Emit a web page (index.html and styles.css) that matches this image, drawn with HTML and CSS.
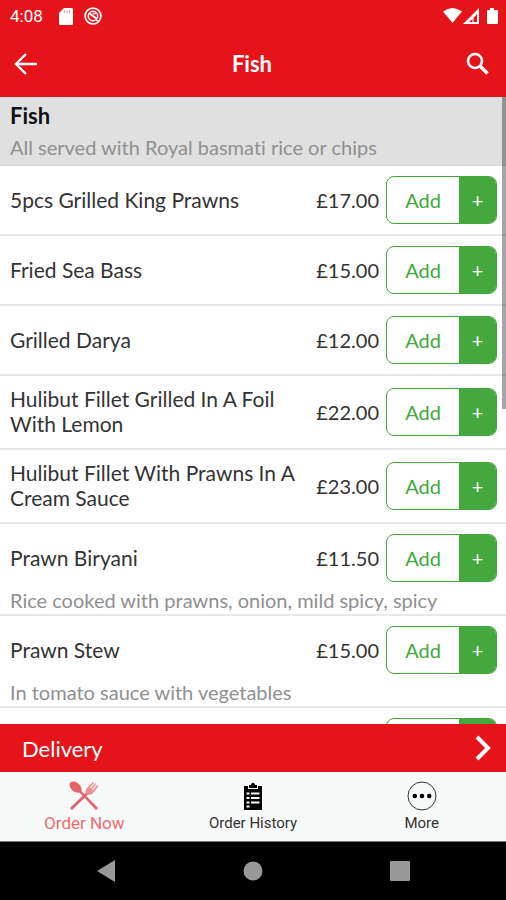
FILE: index.html
```
<!DOCTYPE html>
<html lang="en">
<head>
    <meta charset="UTF-8">
    <meta name="viewport" content="width=device-width, initial-scale=1.0">
    <title>Fish</title>
    <link rel="stylesheet" href="styles.css">
</head>

<body>
    <div class="status-bar">
        <span class="clock">4:08</span>
        <svg class="sd-icon" width="14" height="17" viewBox="0 0 14 17"><path fill="#fff" d="M5 0h7.500a1.500 1.500 0 0 1 1.500 1.500v14a1.500 1.500 0 0 1-1.500 1.500h-11A1.500 1.500 0 0 1 0 15.500V5z"/><path stroke="#e5141b" stroke-width="1" opacity=".6" d="M5.500 2.500v2M8 2.500v2M10.500 2.500v2"/></svg>
        <svg class="app-icon" width="18" height="18" viewBox="0 0 18 18" fill="none" stroke="#fff"><circle cx="9" cy="9" r="7.900" stroke-width="1.700"/><circle cx="9" cy="9" r="4.700" stroke-width="1.500"/><path stroke-width="2" d="M5.500 6.500l7 5"/><path stroke-width="1.500" d="M8.500 6.500h3.500"/><path stroke-width="1.600" d="M12.500 13l2.500 2"/></svg>
        <svg class="signal-icons" width="55" height="18" viewBox="0 0 55 18"><path fill="#fff" d="M0 4.500Q9.500-2.500 19 4.500L9.500 16z"/><path fill="#fff" d="M36 1v16H20z"/><path fill="#e5141b" d="M34 7v8h-3.500v-4zM29.500 12v3H26z"/><path fill="#fff" d="M47 1h4v2h3a1 1 0 0 1 1 1v12a1 1 0 0 1-1 1h-9a1 1 0 0 1-1-1V4a1 1 0 0 1 1-1h2z"/></svg>
    </div>

    <header class="header">
        <button class="icon-button" aria-label="Back">
            <svg width="24" height="22" viewBox="0 0 24 22" fill="none" stroke="#fff" stroke-width="2.400"><path d="M12 1L2 11l10 10M2 11h21"/></svg>
        </button>
        <h1>Fish</h1>
        <button class="icon-button" aria-label="Search">
            <svg width="24" height="24" viewBox="0 0 24 24" fill="none" stroke="#fff"><circle cx="9" cy="9" r="7" stroke-width="2.600"/><path stroke-width="3.600" d="M14 14l7.500 7.500"/></svg>
        </button>
    </header>

    <main class="menu">
        <div class="section-title">
            <h2>Fish</h2>
            <p>All served with Royal basmati rice or chips</p>
        </div>
        <div class="item">
            <span class="name">5pcs Grilled King Prawns</span>
            <span class="price">£17.00</span>
            <button class="add-button"><span class="add">Add</span><span class="plus">+</span></button>
        </div>
        <div class="item">
            <span class="name">Fried Sea Bass</span>
            <span class="price">£15.00</span>
            <button class="add-button"><span class="add">Add</span><span class="plus">+</span></button>
        </div>
        <div class="item">
            <span class="name">Grilled Darya</span>
            <span class="price">£12.00</span>
            <button class="add-button"><span class="add">Add</span><span class="plus">+</span></button>
        </div>
        <div class="item">
            <span class="name">Hulibut Fillet Grilled In A Foil With Lemon</span>
            <span class="price">£22.00</span>
            <button class="add-button"><span class="add">Add</span><span class="plus">+</span></button>
        </div>
        <div class="item">
            <span class="name">Hulibut Fillet With Prawns In A Cream Sauce</span>
            <span class="price">£23.00</span>
            <button class="add-button"><span class="add">Add</span><span class="plus">+</span></button>
        </div>
        <div class="item with-description">
            <span class="name">Prawn Biryani</span>
            <span class="price">£11.50</span>
            <button class="add-button"><span class="add">Add</span><span class="plus">+</span></button>
            <p class="description">Rice cooked with prawns, onion, mild spicy, spicy</p>
        </div>
        <div class="item with-description">
            <span class="name">Prawn Stew</span>
            <span class="price">£15.00</span>
            <button class="add-button"><span class="add">Add</span><span class="plus">+</span></button>
            <p class="description">In tomato sauce with vegetables</p>
        </div>
        <div class="item">
            <span class="name"></span>
            <span class="price"></span>
            <button class="add-button" aria-label="Add"><span class="add"></span><span class="plus"></span></button>
        </div>
        <div class="scrollbar"></div>
    </main>

    <button class="delivery">
        <span>Delivery</span>
        <svg width="18" height="26" viewBox="0 0 18 26" fill="none" stroke="#fff" stroke-width="4"><path d="M3 2l11 11L3 24"/></svg>
    </button>

    <nav class="tabs">
        <a href="#" class="tab active">
            <svg width="30" height="30" viewBox="0 0 30 30"><g fill="#e2636a"><path d="M1 2C4-1 9 1 11.500 5c1.500 2.500 1.300 4 .8 5L29 27l-2 2L10.500 11.500C6 13-1 7 1 2z"/><path d="M1 27l16-15.500 2 2L3 29z"/></g><path fill="#eb9296" d="M16.500 12.500c-.5-3 .5-5 2.500-6.500l5-5 1 1-4 4.500.8.800L26.500 2l1 1-4.500 5 .8.800L28.500 4l1 1-4.500 6c-2 2.500-4 3-6.500 2.500z"/></svg>
            <span>Order Now</span>
        </a>
        <a href="#" class="tab">
            <svg width="30" height="30" viewBox="0 0 30 30"><path d="M6 5h4v3h10V5h4v24H6z"/><path d="M11 4h2c.5-3 3.500-3 4 0h2v3h-8z"/><path stroke="#f8f9f9" stroke-width="2" d="M8.500 12.500h3M13 12.500h8.500M8.500 17h3M13 17h8.500M8.500 21.500h3M13 21.500h8.500M8.500 25.500h3"/></svg>
            <span>Order History</span>
        </a>
        <a href="#" class="tab">
            <svg width="30" height="30" viewBox="0 0 30 30"><circle cx="15" cy="15" r="14" fill="none" stroke="#333" stroke-width="1"/><circle cx="7.800" cy="15" r="2.300"/><circle cx="15" cy="15" r="2.300"/><circle cx="22.200" cy="15" r="2.300"/></svg>
            <span>More</span>
        </a>
    </nav>

    <div class="system-nav">
        <button aria-label="System back"><svg width="20" height="22" viewBox="0 0 20 22"><path fill="#999" d="M19 0v22L1 11z"/></svg></button>
        <button aria-label="Home"><svg width="20" height="20" viewBox="0 0 20 20"><circle cx="10" cy="10" r="9.500" fill="#999"/></svg></button>
        <button aria-label="Recent apps"><svg width="20" height="20" viewBox="0 0 20 20"><rect width="20" height="20" rx="1" fill="#999"/></svg></button>
    </div>
</body>
</html>
```
FILE: styles.css
```
* {
    box-sizing: border-box;
}
body {
    font-family: Lato, sans-serif;
    font-variant-ligatures: none;
    color: #333;
    background-color: #fff;
    margin: 0;
    height: 100vh;
    display: flex;
    flex-direction: column;
}
h1, h2, p {
    margin: 0;
}
button {
    font-family: inherit;
    border: none;
    background: none;
    padding: 0;
    cursor: pointer;
}
svg {
    display: block;
}
.status-bar {
    flex: none;
    display: flex;
    align-items: center;
    height: 32px;
    padding: 0 8px 0 10px;
    background-color: #e5141b;
    color: #fff;
}
.clock {
    font-family: Roboto, sans-serif;
    font-size: 17px;
}
.sd-icon {
    margin-left: 16px;
}
.app-icon {
    margin-left: 11px;
}
.signal-icons {
    margin-left: auto;
}
.header {
    flex: none;
    display: flex;
    align-items: center;
    justify-content: space-between;
    height: 65px;
    padding: 0 16px 2px 14px;
    background-color: #e5141b;
    color: #fff;
}
.header h1 {
    font-size: 22px;
    font-weight: bold;
}
.menu {
    position: relative;
    flex: 1;
    min-height: 0;
    overflow: hidden;
}
.section-title {
    padding: 7px 10px;
    background-color: #e0e0e0;
    border-bottom: 1px solid #d6d6d6;
}
.section-title h2 {
    font-size: 22px;
    line-height: 24px;
    color: #111;
}
.section-title p {
    margin-top: 8px;
}
.section-title p, .description {
    font-size: 20px;
    line-height: 22px;
    color: #8f8f8f;
}
.item {
    display: flex;
    flex-wrap: wrap;
    align-items: center;
    padding: 10px 9px 10px 10px;
    border-bottom: 2px solid #e8e8e8;
}
.with-description {
    padding-bottom: 3px;
}
.name {
    flex: 1;
    padding-bottom: 2px;
    font-size: 21px;
    line-height: 25px;
}
.price {
    width: 72px;
    margin-right: 7px;
    text-align: right;
    font-size: 20px;
}
.description {
    width: 100%;
    margin-top: 7px;
}
.add-button {
    display: flex;
    width: 111px;
    height: 48px;
    border: 1px solid #44a83e;
    border-radius: 8px;
    overflow: hidden;
    font-size: 20px;
    line-height: 46px;
    color: #44a83e;
}
.add {
    flex: 1;
}
.plus {
    width: 37px;
    background-color: #44a83e;
    color: #fff;
}
.scrollbar {
    position: absolute;
    top: 0;
    right: 0;
    width: 4px;
    height: 312px;
    background-color: rgba(0, 0, 0, 0.35);
}
.delivery {
    flex: none;
    display: flex;
    align-items: center;
    justify-content: space-between;
    height: 48px;
    padding: 0 14px 0 22px;
    background-color: #e5141b;
    color: #fff;
    font-size: 22px;
}
.tabs {
    flex: none;
    display: flex;
    height: 70px;
    background-color: #f8f9f9;
    border-bottom: 1px solid #777;
}
.tab {
    flex: 1;
    display: flex;
    flex-direction: column;
    align-items: center;
    padding-top: 9px;
    font-family: Roboto, sans-serif;
    font-size: 15px;
    line-height: 24px;
    color: #333;
    text-decoration: none;
}
.active {
    font-size: 17px;
    color: #ee6c70;
}
.system-nav {
    flex: none;
    display: flex;
    align-items: center;
    justify-content: space-between;
    height: 58px;
    padding: 0 96px;
    background-color: #000;
}
```
